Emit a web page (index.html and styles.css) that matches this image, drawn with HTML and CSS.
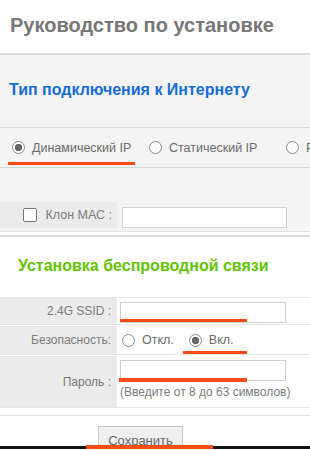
FILE: index.html
```html
<!DOCTYPE html>
<html lang="ru">
<head>
    <meta charset="UTF-8">
    <title>Руководство по установке</title>
    <link rel="stylesheet" href="styles.css">
</head>
<body>
    <div class="header">
        <h1>Руководство по установке</h1>
    </div>

    <div class="net">
        <h2 class="blue">Тип подключения к Интернету</h2>

        <div class="types">
            <label class="type marked">
                <input type="radio" name="wan" checked>
                <span>Динамический IP</span>
                <span class="mark mark-type"></span>
            </label>
            <label class="type">
                <input type="radio" name="wan">
                <span>Статический IP</span>
            </label>
            <label class="type">
                <input type="radio" name="wan">
                <span>PPPoE</span>
            </label>
        </div>

        <div class="mac-row">
            <div class="cell-label">
                <input type="checkbox" id="macClone">
                <label for="macClone">Клон МАС :</label>
            </div>
            <div class="cell-value">
                <input type="text" class="field">
            </div>
        </div>
    </div>

    <div class="wifi">
        <h2 class="green">Установка беспроводной связи</h2>

        <div class="form">
            <div class="row row-ssid">
                <div class="cell-label">2.4G SSID :</div>
                <div class="cell-value">
                    <input type="text" class="field">
                    <span class="mark mark-ssid"></span>
                </div>
            </div>
            <div class="row row-sec">
                <div class="cell-label">Безопасность:</div>
                <div class="cell-value choices">
                    <label class="choice"><input type="radio" name="sec"> Откл.</label>
                    <label class="choice"><input type="radio" name="sec" checked> Вкл.</label>
                    <span class="mark mark-sec"></span>
                </div>
            </div>
            <div class="row row-pass">
                <div class="cell-label">Пароль :</div>
                <div class="cell-value">
                    <input type="password" class="field">
                    <div class="hint">(Введите от 8 до 63 символов)</div>
                    <span class="mark mark-pass"></span>
                </div>
            </div>
        </div>
    </div>

    <div class="bottom">
        <div class="footer">
            <button class="save">Сохранить</button>
        </div>
        <div class="bar"></div>
        <span class="mark mark-save"></span>
    </div>
</body>
</html>
```

FILE: styles.css
```css
html, body { margin: 0; width: 310px; height: 450px; overflow: hidden; background: #fff; }
body { font-family: "Liberation Sans", Arial, sans-serif; font-size: 12px; color: #7a7a7a; }

.header { height: 55px; box-sizing: border-box; padding: 14px 0 0 10px; border-bottom: 2px solid #dadada; }
.header h1 { margin: 0; font-size: 20px; line-height: 23px; font-weight: bold; color: #777; white-space: nowrap; }

h2 { margin: 0; font-size: 16px; line-height: 20px; font-weight: bold; white-space: nowrap; }
.blue { color: #156cd9; padding: 25px 0 0 9px; }
.green { color: #62c400; padding: 19px 0 0 18px; }

.net { background: #f4f4f4; padding-bottom: 3px; border-bottom: 1px solid #e4e4e4; }

.types { margin-top: 27px; height: 39px; padding-left: 12px; border-top: 1px solid #dcdcdc; border-bottom: 1px solid #d6d6d6;
    display: grid; grid-auto-flow: column; grid-auto-columns: 137px; align-items: center; white-space: nowrap; font-size: 12.5px; }
.type { display: flex; align-items: center; gap: 7px; color: #6a6a6a; position: relative; }

input[type=radio] { -webkit-appearance: none; appearance: none; margin: 0; width: 13px; height: 13px; flex: none;
    border: 1px solid #8a8a8a; border-radius: 50%; background: #fff; box-sizing: border-box; }
input[type=radio]:checked { background: radial-gradient(circle, #666 0 3.4px, #fff 4px); }
input[type=checkbox] { -webkit-appearance: none; appearance: none; margin: 0; width: 14px; height: 14px; flex: none;
    border: 1px solid #777; border-radius: 2px; background: #fff; box-sizing: border-box; }

.mac-row { margin-top: 34px; display: grid; grid-template-columns: 117px 1fr; height: 26px; }
.mac-row .cell-label { gap: 9px; padding-right: 5px; font-size: 12.5px; }
.mac-row .cell-value { padding-left: 5px; display: flex; align-items: flex-end; }
.mac-row .field { width: 165px; }

.cell-label { background: #ebebeb; display: flex; align-items: center; justify-content: flex-end; padding-right: 6px; white-space: nowrap; }
.cell-value { position: relative; padding-left: 3px; }

.field { width: 166px; height: 21px; box-sizing: border-box; border: 1px solid #cfcfcf; background: #fff; margin: 0; padding: 0 4px; outline: none; }

.wifi { margin-top: 3px; border-top: 2px solid #d8d8d8; }

.form { margin-top: 21px; border-top: 1px solid #e6e6e6; }
.row { display: grid; grid-template-columns: 117px 1fr; border-bottom: 1px solid #e6e6e6; }
.row + .row { margin-top: 1px; }
.row-ssid { height: 26px; }
.row-ssid .cell-value { padding-top: 4px; }
.row-sec { height: 28px; }
.row-pass { height: 51px; }
.row-pass .cell-value { padding-top: 4px; }

.choices { display: flex; align-items: center; padding-left: 5px; gap: 15px; color: #6a6a6a; font-size: 12.5px; }
.choice { display: flex; align-items: center; gap: 7px; }

.hint { margin-top: 4px; line-height: 15px; white-space: nowrap; }

.bottom { position: relative; margin-top: 7px; }
.footer { height: 31px; overflow: hidden; border-top: 1px solid #dedede; padding: 10px 0 0 98px; box-sizing: border-box; }
.save { height: 28px; width: 85px; padding: 0; background: #efefef; border: 1px solid #c9c9c9; border-bottom: none;
    font-family: inherit; font-size: 13px; color: #666; }
.bar { height: 3px; background: #111; }

.mark { position: absolute; height: 3px; background: #fc4c17; }
.mark-type { left: -4px; top: 21px; width: 127px; }
.mark-ssid { left: 3px; top: 21px; width: 127px; }
.mark-sec { left: 66px; top: 25px; width: 64px; }
.mark-pass { left: 2px; top: 22px; width: 128px; height: 4px; }
.mark-save { left: 86px; bottom: 0; width: 127px; height: 4px; }
```
